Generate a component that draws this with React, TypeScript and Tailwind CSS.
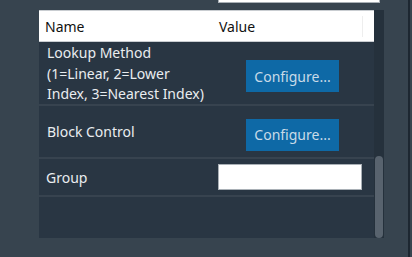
export default function App() {
  const font = { fontFamily: '"Noto Sans", "Open Sans", sans-serif' };
  return (
    <div className="flex h-[257px] w-[412px] overflow-hidden bg-[#37444f] text-[14px]" style={font}>
      <div className="flex w-[408px] flex-col">
        {/* top text box, clipped */}
        <div className="ml-[218px] h-[3px] w-[162px] border-x border-b border-[#a9b0b6] bg-white" />

        {/* property grid */}
        <div className="ml-[39px] mt-[7px] flex h-[228px] w-[345px]">
          <div className="flex w-[335px] flex-col bg-[#293643]">
            <div className="flex h-[32px] items-center border-y border-[#c9cdd1] bg-white text-[#111]">
              <div className="w-[180px] pl-[6px]">Name</div>
              <div className="w-[144px] border-r border-[#eeeeee] pl-0">Value</div>
            </div>

            <div className="flex h-[64px] border-b-2 border-[#37434f]">
              <div className="w-[173px] pl-[8px] pr-[4px] pt-[1px] leading-[20.5px] text-[#e9edf0]">
                Lookup Method (1=Linear, 2=Lower Index, 3=Nearest Index)
              </div>
              <div className="flex flex-1 items-center pt-[6px]">
                <button className="ml-[34px] h-[32px] w-[93px] bg-[#0e69a6] text-[#c8dbe8]">Configure...</button>
              </div>
            </div>

            <div className="flex h-[53px] items-center border-b-2 border-[#37434f]">
              <div className="w-[173px] pl-[8px] text-[#e9edf0]">Block Control</div>
              <div className="flex flex-1 items-center pt-[6px]">
                <button className="ml-[34px] h-[32px] w-[93px] bg-[#0e69a6] text-[#c8dbe8]">Configure...</button>
              </div>
            </div>

            <div className="flex h-[38px] items-center border-b-2 border-[#37434f]">
              <div className="w-[173px] pl-[7px] text-[#e9edf0]">Group</div>
              <div className="ml-[6px] h-[26px] w-[144px] border border-[#a9b0b6] bg-white" />
            </div>

            <div className="flex-1" />
          </div>

          {/* scrollbar */}
          <div className="flex w-[10px] flex-col bg-[#25313c]">
            <div className="h-[146px]" />
            <div className="ml-[1px] w-[8px] flex-1 rounded-[4px] bg-[#58636e]" />
          </div>
        </div>
      </div>
      <div className="w-[2px] bg-[#1d2731]" />
    </div>
  );
}
